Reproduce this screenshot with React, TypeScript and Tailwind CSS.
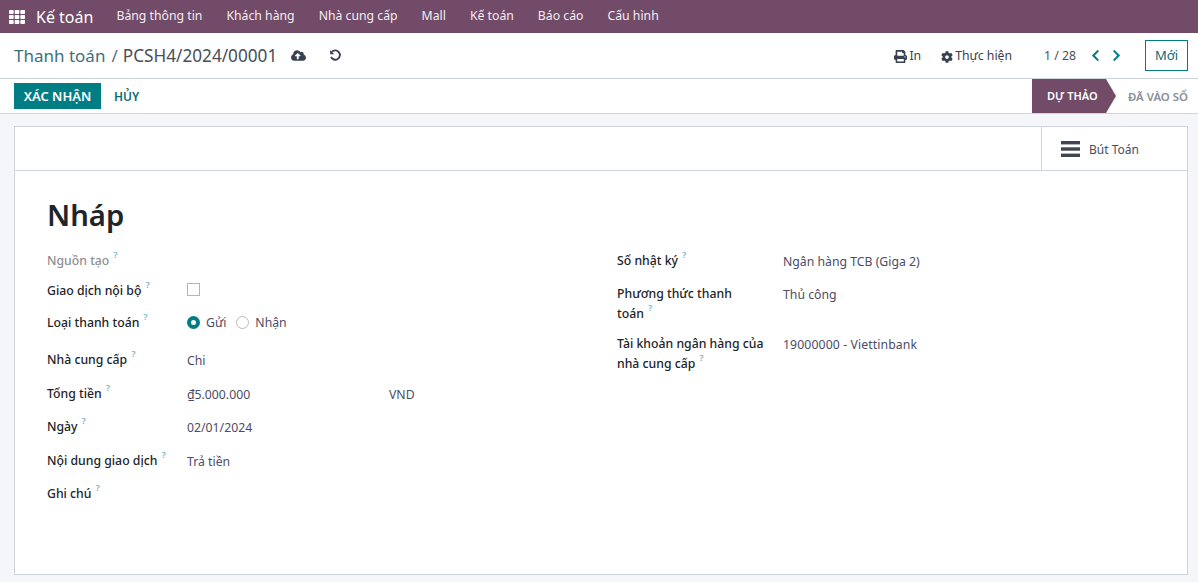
import { FaCloudUploadAlt, FaPrint, FaCog, FaChevronLeft, FaChevronRight, FaTh } from "react-icons/fa";

const menus = ["Bảng thông tin", "Khách hàng", "Nhà cung cấp", "Mall", "Kế toán", "Báo cáo", "Cấu hình"];

function Help() {
  return <sup className="ml-[4px] text-[9.5px] font-semibold text-[#7fb6c4] top-[-7px] relative leading-none align-baseline">?</sup>;
}

function Undo() {
  return (
    <svg viewBox="0 0 14 14" className="h-[13px] w-[13px]" fill="none" stroke="#374151" strokeWidth="2">
      <path d="M3 3.2 A5 5 0 1 1 2.2 8.6" />
      <path d="M1.2 1.2 V5.6 H5.6 Z" fill="#374151" stroke="none" />
    </svg>
  );
}

function Label({ children, muted, className }: { children: React.ReactNode; muted?: boolean; className?: string }) {
  return (
    <div className={`text-[12.25px] leading-[20px] font-medium ${muted ? "text-[#8f8f8f]" : "text-[#212529]"} ${className ?? ""}`}>
      {children}
      <Help />
    </div>
  );
}

export default function App() {
  return (
    <div className="flex h-[582px] w-[1198px] flex-col overflow-hidden bg-[#f5f6f9] font-['Noto_Sans',sans-serif] text-[12.25px] text-[#4c4c66]">
      {/* navbar */}
      <div className="flex h-[33px] items-center bg-[#714b67] text-white">
        <FaTh className="ml-[9px] h-[16px] w-[16px]" />
        <span className="ml-[11px] text-[16px] leading-none">Kế toán</span>
        <div className="ml-[11px] flex">
          {menus.map((m) => (
            <span key={m} className="px-[12px] text-[12.25px] text-[#f3eef2]">{m}</span>
          ))}
        </div>
      </div>

      {/* breadcrumb row */}
      <div className="flex h-[46px] items-center border-b border-[#ced4da] bg-white pl-[14px] pr-[10px]">
        <span className="text-[17px] text-[#3f6f7c]">Thanh toán</span>
        <span className="ml-[6px] text-[17px] text-[#5f6b76]">/</span>
        <span className="ml-[5px] text-[17.2px] text-[#495057]">PCSH4/2024/00001</span>
        <FaCloudUploadAlt className="ml-[14px] h-[15px] w-[15px] text-[#374151]" />
        <span className="ml-[23px]"><Undo /></span>
        <div className="ml-auto flex items-center">
          <FaPrint className="mt-[2px] h-[13px] w-[13px] text-[#374151]" />
          <span className="ml-[2px] mt-[2px] text-[#374151]">In</span>
          <FaCog className="ml-[20px] mt-[2px] h-[12px] w-[12px] text-[#374151]" />
          <span className="ml-[2px] mt-[2px] text-[#374151]">Thực hiện</span>
          <span className="ml-[32px] mt-[2px] text-[#495057]">1 / 28</span>
          <FaChevronLeft className="ml-[13px] h-[13px] w-[13px] text-[#017e84]" />
          <FaChevronRight className="ml-[8px] h-[13px] w-[13px] text-[#017e84]" />
          <span className="ml-[22px] flex h-[31px] w-[43px] items-center justify-center border border-[#017e84] text-[13px] text-[#0b6a72]">Mới</span>
        </div>
      </div>

      {/* status row */}
      <div className="flex h-[35px] items-center border-b border-[#ced4da] bg-white pl-[14px]">
        <span className="flex h-[26px] w-[87px] items-center justify-center bg-[#017e84] pt-[1px] text-[13px] font-semibold text-white">XÁC NHẬN</span>
        <span className="ml-[13px] mt-[1px] text-[12px] font-semibold text-[#0b6a72]">HỦY</span>
        <div className="ml-auto flex h-full items-center">
          <div className="relative flex h-full w-[74px] items-center bg-[#714b67] pl-[15px] pt-[1px] text-[11px] font-semibold text-white">
            DỰ THẢO
            <span className="absolute left-full top-0 h-0 w-0 border-y-[17px] border-l-[10px] border-y-transparent border-l-[#714b67]" />
          </div>
          <span className="ml-[22px] mr-[10px] mt-[1px] text-[11.4px] font-semibold text-[#8a8f98]">ĐÃ VÀO SỔ</span>
        </div>
      </div>

      {/* sheet */}
      <div className="mx-[14px] mt-[12px] h-[449px] w-[1174px] border border-[#ced4da] bg-white">
        <div className="flex h-[44px] justify-end border-b border-[#ced4da]">
          <div className="flex w-[146px] items-center border-l border-[#ced4da] pl-[19px]">
            <svg viewBox="0 0 19 16" className="h-[16px] w-[19px]" fill="#3f4652">
              <rect y="0" width="19" height="3.4" />
              <rect y="6.3" width="19" height="3.4" />
              <rect y="12.6" width="19" height="3.4" />
            </svg>
            <span className="ml-[9px] mt-[2px] text-[12px] text-[#4c4c66]">Bút Toán</span>
          </div>
        </div>
        <div className="px-[32px]">
          <div className="mt-[22px] text-[29.25px] font-semibold leading-[44px] text-[#212529]">Nháp</div>
          <div className="mt-[10px] flex">
            <div className="w-[570px]">
              <div className="flex h-[33px] pt-[4px]"><Label muted>Nguồn tạo</Label></div>
              <div className="flex h-[31px] items-start pt-[1px]">
                <Label className="w-[140px]">Giao dịch nội bộ</Label>
                <span className="mt-[2px] h-[13px] w-[13px] border border-[#adb5bd]" />
              </div>
              <div className="flex h-[37px] items-start pt-[2px]">
                <Label className="w-[140px]">Loại thanh toán</Label>
                <span className="mt-[3px] h-[13px] w-[13px] rounded-full border-[4px] border-[#017e84] bg-white" />
                <span className="ml-[6px] leading-[20px]">Gửi</span>
                <span className="ml-[10px] mt-[3px] h-[13px] w-[13px] rounded-full border border-[#bbb]" />
                <span className="ml-[6px] leading-[20px]">Nhận</span>
              </div>
              <div className="flex h-[34px] items-start pt-[2px]">
                <Label className="w-[140px]">Nhà cung cấp</Label>
                <span className="mt-[1px] leading-[20px]">Chi</span>
              </div>
              <div className="flex h-[33px] items-start pt-[2px]">
                <Label className="w-[140px]">Tổng tiền</Label>
                <span className="mt-[1px] w-[202px] leading-[20px]">₫5.000.000</span>
                <span className="mt-[1px] leading-[20px]">VND</span>
              </div>
              <div className="flex h-[34px] items-start pt-[2px]">
                <Label className="w-[140px]">Ngày</Label>
                <span className="mt-[1px] leading-[20px]">02/01/2024</span>
              </div>
              <div className="flex h-[33px] items-start pt-[2px]">
                <Label className="w-[140px]">Nội dung giao dịch</Label>
                <span className="mt-[1px] leading-[20px]">Trả tiền</span>
              </div>
              <div className="flex items-start pt-[2px]"><Label>Ghi chú</Label></div>
            </div>
            <div className="flex-1">
              <div className="flex h-[36px] items-start pt-[4px]">
                <Label className="w-[166px]">Sổ nhật ký</Label>
                <span className="mt-[1px] leading-[20px]">Ngân hàng TCB (Giga 2)</span>
              </div>
              <div className="flex h-[50px] items-start pt-[1px]">
                <Label className="w-[166px]">Phương thức thanh<br />toán</Label>
                <span className="mt-[1px] leading-[20px]">Thủ công</span>
              </div>
              <div className="flex items-start pt-[1px]">
                <Label className="w-[166px]">Tài khoản ngân hàng của nhà cung cấp</Label>
                <span className="mt-[1px] leading-[20px] tracking-[0.1px]">19000000 - Viettinbank</span>
              </div>
            </div>
          </div>
        </div>
      </div>
    </div>
  );
}
